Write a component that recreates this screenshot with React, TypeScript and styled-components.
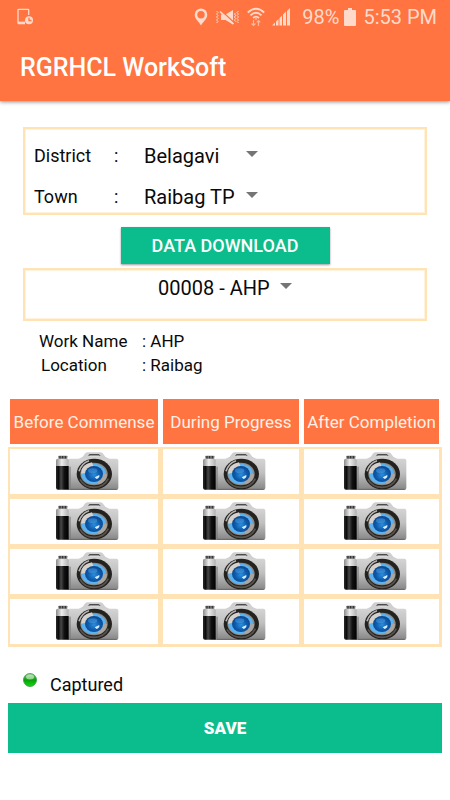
import React from "react";
import styled, { createGlobalStyle } from "styled-components";

const orange = "#ff7440";
const green = "#0bbd8c";
const cream = "#ffe3b5";

const GlobalStyle = createGlobalStyle`
  * { box-sizing: border-box; }
  body {
    margin: 0;
    background: #fff;
    color: #0a0a0a;
    font-family: Roboto, "Liberation Sans", sans-serif;
    font-size: 18px;
    line-height: 24px;
  }
  button, select { font-family: inherit; margin: 0; border: 0; border-radius: 0; }
`;

const Page = styled.div`
  min-height: 100vh;
  background: #fff;
`;

const Header = styled.header`
  background: ${orange};
  color: #fff;
  box-shadow: 0 1px 4px rgba(0, 0, 0, 0.45);
`;

const StatusBar = styled.div`
  display: flex;
  align-items: center;
  height: 34px;
  padding: 0 13px 0 17px;
  color: #ffdacb;
  font-size: 20px;
`;

const StatusIcons = styled.div`
  display: flex;
  align-items: center;
  gap: 7px;
  margin-left: auto;
`;

const BatteryGroup = styled.span`
  display: flex;
  align-items: center;
  gap: 5px;
  margin-left: 4px;
`;

const Title = styled.h1`
  margin: 0;
  padding: 18px 20px 17px;
  font-size: 25px;
  line-height: 32px;
  font-weight: 500;
`;

const Form = styled.section`
  display: flex;
  flex-direction: column;
  padding: 26px 23px 0;
`;

const Panel = styled.div<{ $fields?: boolean }>`
  border: 2px solid ${cream};
  outline: 1px solid #fff3dd;
  outline-offset: -3px;
  padding: ${(p) => (p.$fields ? "6px 9px 0" : "4px 9px 17px")};
`;

const Field = styled.div`
  display: flex;
  align-items: center;
  height: 42px;
  & + & { height: 32px; margin-top: 4px; }
`;

const FieldLabel = styled.label`
  width: 80px;
`;

const Colon = styled.span`
  width: 30px;
`;

const SelectWrap = styled.span<{ $centered?: boolean }>`
  display: flex;
  align-items: center;
  width: ${(p) => (p.$centered ? "134px" : "114px")};
  margin: ${(p) => (p.$centered ? "0 auto" : "0")};
  position: relative;
`;

const Select = styled.select`
  appearance: none;
  width: 100%;
  padding: 0 16px 0 0;
  background: transparent;
  color: #0a0a0a;
  font-size: 20px;
  line-height: 28px;
`;

const Arrow = styled.svg`
  position: absolute;
  right: 0;
  margin-bottom: 4px;
  pointer-events: none;
`;

const DownloadButton = styled.button`
  align-self: center;
  margin: 12px 0 4px;
  width: 209px;
  height: 37px;
  background: ${green};
  color: #fff;
  font-size: 18px;
  font-weight: 500;
  box-shadow: 0 1px 2px rgba(0, 0, 0, 0.4);
`;

const Details = styled.dl`
  display: grid;
  grid-template-columns: 103px 1fr;
  margin: 8px 0 0;
  padding: 0 16px;
  font-size: 17px;
`;

const Term = styled.dt<{ $inset?: boolean }>`
  padding-left: ${(p) => (p.$inset ? "2px" : "0")};
`;

const Value = styled.dd`
  margin: 0;
`;

const Content = styled.main`
  padding-bottom: 47px;
`;

const PhotoTable = styled.table`
  width: calc(100% - 16px);
  margin: 20px 8px 0;
  border-spacing: 0;
  table-layout: fixed;
`;

const HeadCell = styled.th<{ $width: string }>`
  width: ${(p) => p.$width};
  height: 50px;
  padding: 0;
  border: solid transparent;
  border-width: 2px 3px 3px 2px;
  background: ${orange};
  background-clip: padding-box;
  color: #fff0e8;
  font-size: 17px;
  font-weight: 400;
  white-space: nowrap;
`;

const PhotoCell = styled.td`
  height: 50px;
  padding: 0 0 0 7px;
  border: solid ${cream};
  border-width: 2px 3px 3px 2px;
  text-align: center;
`;

const PhotoButton = styled.button`
  display: block;
  margin: 0 auto;
  padding: 0;
  background: transparent;
  line-height: 0;
`;

const Legend = styled.div`
  display: flex;
  align-items: flex-end;
  gap: 13px;
  height: 56px;
  padding: 0 23px 6px;
`;

const Dot = styled.svg`
  margin-bottom: 10px;
`;

const SaveButton = styled.button`
  display: block;
  width: calc(100% - 16px);
  height: 50px;
  margin: 0 8px;
  background: ${green};
  color: #fff;
  font-size: 17px;
  font-weight: 900;
`;

const TabletIcon = () => (
  <svg width="17" height="18" viewBox="0 0 17 18" fill="none" stroke="#ffdacb" strokeWidth="1.3">
    <path d="M8 15.500H1.500Q1 15.500 1 15V2q0-.7.7-.7H11q.7 0 .7.7V7" />
    <path d="M1 14.300h7" />
    <circle cx="12" cy="12.300" r="4" fill="#ffdacb" stroke="none" />
    <path d="M12 9.800v2.700h2.500" stroke={orange} />
  </svg>
);

const PinIcon = () => (
  <svg width="14" height="18" viewBox="0 0 14 18">
    <path
      fill="#ffdacb"
      fillRule="evenodd"
      d="M7 .5A6.300 6.300 0 0 0 .7 6.800C.7 11 5 13.500 7 17.500 9 13.500 13.300 11 13.300 6.800A6.300 6.300 0 0 0 7 .5zm0 2.500a3.700 3.700 0 1 1 0 7.400 3.700 3.700 0 0 1 0-7.400z"
    />
  </svg>
);

const MuteIcon = () => (
  <svg width="25" height="17" viewBox="0 0 25 17" fill="none" stroke="#ffdacb">
    <path d="M1.500 2l1.500 1.500L1.500 5 3 6.500 1.500 8 3 9.500 1.500 11 3 12.500 1.500 14M23.500 2L22 3.500 23.500 5 22 6.500 23.500 8 22 9.500 23.500 11 22 12.500 23.500 14" />
    <path d="M20.500 4L19.500 5l1 1.500-1 1.500 1 1.500-1 1.500 1 1.500" />
    <path d="M6 5.500h4.500L18 1v14.500l-7.500-4.500H6z" fill="#ffdacb" stroke="none" />
    <path d="M6 1.500L19 13.500" stroke={orange} strokeWidth="1.500" />
    <path d="M5 2.500L18.500 15" strokeWidth="1.700" />
  </svg>
);

const WifiIcon = () => (
  <svg width="18" height="20" viewBox="0 0 18 20" fill="none" stroke="#ffdacb" strokeWidth="1.7">
    <path d="M.8 5.500Q9-2 17.200 5.500M3.500 8.300Q9 3.200 14.500 8.300M6 11Q9 8.300 12 11" />
    <path d="M7.700 11.500h2.600L9 13z" fill="#ffdacb" stroke="none" />
    <path
      d="M6.500 13v5.500M4.500 16.500l2 2 2-2M11.500 19v-5.500M9.700 15.300l1.800-1.800 1.800 1.800"
      strokeWidth="1.2"
      opacity=".65"
    />
  </svg>
);

const SignalIcon = () => (
  <svg width="19" height="18" viewBox="0 0 19 18" fill="#ffdacb">
    <path d="M0 17.500L3 14.500v3zM4 13.500l2.500-2.500v6.500H4zM7.500 10L10 7.500v10H7.500zM11 6.500l3-3v14h-3zM15 3l3-3v17.500h-3z" />
  </svg>
);

const BatteryIcon = () => (
  <svg width="12" height="18" viewBox="0 0 12 18" fill="#ffdacb">
    <path d="M4 0h4v2h3q1 0 1 1v14q0 1-1 1H1q-1 0-1-1V3q0-1 1-1h3z" />
  </svg>
);

const CameraIcon = ({ id }: { id: string }) => (
  <svg width="63" height="39" viewBox="0 0 189 117">
    <defs>
      <linearGradient id={`${id}-body`} x1="0" y1="0" x2="0" y2="1">
        <stop offset="0" stopColor="#d4d4d4" />
        <stop offset="0.45" stopColor="#c0c0c0" />
        <stop offset="1" stopColor="#868686" />
      </linearGradient>
      <linearGradient id={`${id}-grip`} x1="0" y1="0" x2="1" y2="0">
        <stop offset="0" stopColor="#2a2a2a" />
        <stop offset="0.2" stopColor="#0c0c0c" />
        <stop offset="0.4" stopColor="#484848" />
        <stop offset="0.65" stopColor="#111" />
        <stop offset="1" stopColor="#000" />
      </linearGradient>
      <linearGradient id={`${id}-cap`} x1="0" y1="0" x2="1" y2="0">
        <stop offset="0" stopColor="#8a8a8a" />
        <stop offset="0.45" stopColor="#ececec" />
        <stop offset="1" stopColor="#b0b0b0" />
      </linearGradient>
      <radialGradient id={`${id}-lens`} cx="0.5" cy="0.55" r="0.55">
        <stop offset="0" stopColor="#2b8fdd" />
        <stop offset="0.6" stopColor="#0e5aab" />
        <stop offset="1" stopColor="#0c478e" />
      </radialGradient>
    </defs>
    <path d="M66 22L80 14 88 4q3-3 8-3h36q5 0 8 3l8 10 14 8z" fill="#cfcfcf" />
    <path d="M96 11l5-5h27l6 5z" fill="#4c4c4c" />
    <path d="M101 11h28v2h-28z" fill="#eee" />
    <rect x="34" y="20" width="153" height="94" rx="6" fill={`url(#${id}-body)`} />
    <path d="M42 112h140" stroke="#686868" strokeWidth="3" />
    <rect x="37" y="44" width="8" height="68" fill="#777" opacity=".55" />
    <rect x="7" y="11" width="27" height="10" rx="2" fill="#777" />
    <path d="M12 12v8M20 12v8M28 12v8" stroke="#292929" strokeWidth="3" />
    <rect x="0" y="20" width="38" height="28" rx="5" fill={`url(#${id}-cap)`} />
    <path d="M0 42h38v71H6q-6 0-6-6z" fill={`url(#${id}-grip)`} />
    <ellipse cx="115" cy="66" rx="53" ry="46" fill="#24221f" />
    <path d="M72 82q13 24 43 24 29 0 42-26" fill="none" stroke="#59544e" strokeWidth="5" />
    <path d="M69 58q7-24 30-32" fill="none" stroke="#b5b5b5" strokeWidth="5" />
    <ellipse cx="114" cy="66" rx="41" ry="34" fill="#8f8a84" />
    <ellipse cx="113" cy="66" rx="37" ry="31" fill="#5ab2f0" />
    <path d="M75 65q0-28 33-34l4 11q-18 4-23 20z" fill="#d6d1cb" />
    <path d="M153 66q0 22-25 31l-7-10q19-6 21-21z" fill="#aaa59f" />
    <ellipse cx="114" cy="66" rx="27" ry="24" fill={`url(#${id}-lens)`} />
    <ellipse cx="110" cy="56" rx="14" ry="7" fill="#4d9fe0" opacity=".5" />
    <path d="M116 76l14-7q2 8-8 12z" fill="#d7efff" />
  </svg>
);

const StatusDot = () => (
  <Dot width="14" height="14" viewBox="0 0 14 14" aria-hidden="true">
    <defs>
      <linearGradient id="dot-fill" x1="0" y1="0" x2="0" y2="1">
        <stop offset="0" stopColor="#8fcf8f" />
        <stop offset="0.4" stopColor="#20a820" />
        <stop offset="0.5" stopColor="#08a008" />
        <stop offset="1" stopColor="#12dc12" />
      </linearGradient>
    </defs>
    <circle cx="7" cy="7" r="6.500" fill="url(#dot-fill)" stroke="#2f8a2f" strokeWidth=".7" />
    <ellipse cx="7" cy="4" rx="4" ry="2.500" fill="#fff" opacity=".5" />
  </Dot>
);

type PickerProps = { id: string; label?: string; value: string; centered?: boolean };

const Picker = ({ id, label, value, centered }: PickerProps) => (
  <SelectWrap $centered={centered}>
    <Select id={id} aria-label={label} defaultValue={value}>
      <option>{value}</option>
    </Select>
    <Arrow width="12" height="6" viewBox="0 0 12 6" aria-hidden="true">
      <path d="M0 0h12L6 6z" fill="#757575" />
    </Arrow>
  </SelectWrap>
);

const columns = [
  { title: "Before Commense", width: "35.25%" },
  { title: "During Progress", width: "32.5%" },
  { title: "After Completion", width: "32.25%" },
];
const rows = [1, 2, 3, 4];

export default function App() {
  return (
    <Page>
      <GlobalStyle />
      <Header>
        <StatusBar>
          <TabletIcon />
          <StatusIcons>
            <PinIcon />
            <MuteIcon />
            <WifiIcon />
            <SignalIcon />
            <BatteryGroup>
              <span>98%</span>
              <BatteryIcon />
            </BatteryGroup>
            <span>5:53 PM</span>
          </StatusIcons>
        </StatusBar>
        <Title>RGRHCL WorkSoft</Title>
      </Header>
      <Content>
        <Form>
          <Panel $fields>
            <Field>
              <FieldLabel htmlFor="district">District</FieldLabel>
              <Colon>:</Colon>
              <Picker id="district" value="Belagavi" />
            </Field>
            <Field>
              <FieldLabel htmlFor="town">Town</FieldLabel>
              <Colon>:</Colon>
              <Picker id="town" value="Raibag TP" />
            </Field>
          </Panel>
          <DownloadButton type="button">DATA DOWNLOAD</DownloadButton>
          <Panel>
            <Picker id="work" label="Work" value="00008 - AHP" centered />
          </Panel>
          <Details>
            <Term>Work Name</Term>
            <Value>: AHP</Value>
            <Term $inset>Location</Term>
            <Value>: Raibag</Value>
          </Details>
        </Form>
        <PhotoTable>
          <thead>
            <tr>
              {columns.map((column) => (
                <HeadCell key={column.title} $width={column.width} scope="col">
                  {column.title}
                </HeadCell>
              ))}
            </tr>
          </thead>
          <tbody>
            {rows.map((row) => (
              <tr key={row}>
                {columns.map((column, index) => (
                  <PhotoCell key={column.title}>
                    <PhotoButton type="button" aria-label={`${column.title}, photo ${row}`}>
                      <CameraIcon id={`camera-${row}-${index}`} />
                    </PhotoButton>
                  </PhotoCell>
                ))}
              </tr>
            ))}
          </tbody>
        </PhotoTable>
        <Legend>
          <StatusDot />
          <span>Captured</span>
        </Legend>
        <SaveButton type="button">SAVE</SaveButton>
      </Content>
    </Page>
  );
}
